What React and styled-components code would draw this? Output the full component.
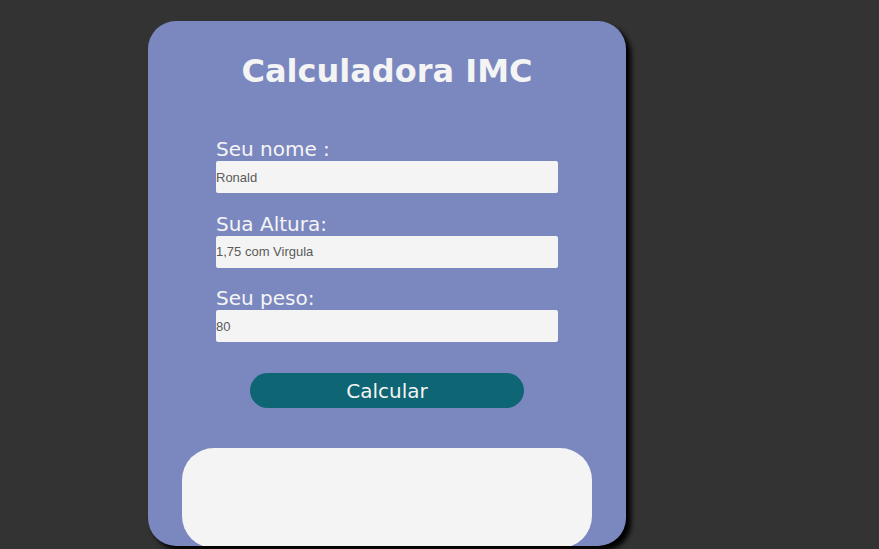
import React from 'react';
import styled, { createGlobalStyle } from 'styled-components';

const GlobalStyle = createGlobalStyle`
  body {
    margin: 0;
    background: #333333;
    font-family: 'DejaVu Sans', Verdana, sans-serif;
  }
`

const Page = styled.main`
  min-height: 549px;
  padding: 21px 0 0 148px;
  box-sizing: border-box;
`

const Card = styled.section`
  width: 478px;
  height: 525px;
  box-sizing: border-box;
  background: #7b88bf;
  border-radius: 28px;
  box-shadow: 5px 5px 5px #000;
  padding-top: 31px;
  display: flex;
  flex-direction: column;
  align-items: center;
  overflow: hidden;
`

const Title = styled.h1`
  margin: 0 0 47px;
  font-size: 32px;
  font-weight: bold;
  line-height: 38px;
  color: #f4f4f4;
`

const Form = styled.form`
  width: 342px;
  display: flex;
  flex-direction: column;
`

const Field = styled.div`
  display: flex;
  flex-direction: column;
  margin-bottom: ${props => props.last ? '31px' : '18.5px'};
`

const Label = styled.label`
  font-size: 20px;
  line-height: 24px;
  color: #f5f5f5;
`

const Input = styled.input`
  height: 32px;
  box-sizing: border-box;
  border: none;
  border-radius: 2px;
  background: #f4f4f4;
  padding: 0;
  font-family: 'Liberation Sans', Arial, sans-serif;
  font-size: 13px;
  color: #5a5a5a;
  outline: none;

  &::placeholder {
    color: #5a5a5a;
  }
`

const Button = styled.button`
  align-self: center;
  width: 274px;
  height: 35px;
  border: none;
  border-radius: 18px;
  background: #0e6573;
  color: #f4f4f4;
  font-family: 'DejaVu Sans', Verdana, sans-serif;
  font-size: 20px;
  cursor: pointer;
`

const Result = styled.div`
  margin-top: 40px;
  width: 410px;
  height: 100px;
  flex-shrink: 0;
  background: #f4f4f4;
  border-radius: 32px;
`

const fields = [
  { id: 'nome', label: 'Seu nome :', value: 'Ronald' },
  { id: 'altura', label: 'Sua Altura:', placeholder: '1,75 com Virgula' },
  { id: 'peso', label: 'Seu peso:', value: '80' },
]

export default function App() {
  return (
    <>
      <GlobalStyle />
      <Page>
        <Card>
          <Title>Calculadora IMC</Title>
          <Form onSubmit={e => e.preventDefault()}>
            {fields.map((f, i) => (
              <Field key={f.id} last={i === fields.length - 1}>
                <Label htmlFor={f.id}>{f.label}</Label>
                <Input id={f.id} defaultValue={f.value} placeholder={f.placeholder} />
              </Field>
            ))}
            <Button type="submit">Calcular</Button>
          </Form>
          <Result />
        </Card>
      </Page>
    </>
  );
}
